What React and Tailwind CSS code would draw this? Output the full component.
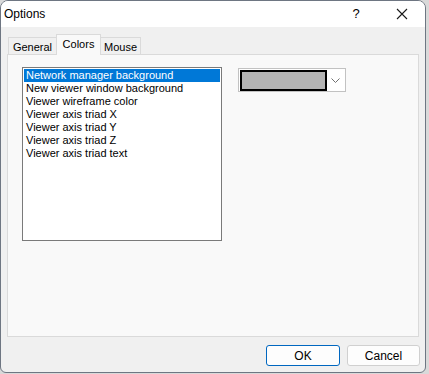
import React from "react";

const items = [
  "Network manager background",
  "New viewer window background",
  "Viewer wireframe color",
  "Viewer axis triad X",
  "Viewer axis triad Y",
  "Viewer axis triad Z",
  "Viewer axis triad text",
];

export default function App() {
  return (
    <div
      className="w-[429px] h-[374px] bg-[#d9d9d9] flex"
      style={{ fontFamily: '"Liberation Sans", Arial, sans-serif' }}
    >
      <div className="w-[426px] h-[373px] flex flex-col border border-[#6e7682] rounded-t-[8px] rounded-b-[6px] overflow-hidden bg-[#f0f0f0] text-[11px] text-[#000]">
        {/* Title bar */}
        <div className="h-[26px] bg-white flex items-center shrink-0">
          <span className="pl-[3px] text-[12px]">Options</span>
          <div className="ml-auto flex items-center">
            <span className="w-[46px] text-center text-[13px]">?</span>
            <span className="w-[46px] flex justify-center">
              <svg width="12" height="12" viewBox="0 0 12 12">
                <path d="M1 1 L11 11 M11 1 L1 11" stroke="#1a1a1a" strokeWidth="1.1" />
              </svg>
            </span>
          </div>
        </div>
        {/* Tabs */}
        <div className="pl-[7px] flex items-end h-[28px] shrink-0">
          <div className="h-[18px] w-[49px] border border-b-0 border-[#dadada] bg-[#f0f0f0] flex items-center justify-center pt-[1px]">
            General
          </div>
          <div className="h-[21px] w-[45px] border border-b-0 border-[#dadada] bg-[#f9f9f9] flex items-center justify-center -mx-px relative z-10 pb-[1px]">
            Colors
          </div>
          <div className="h-[18px] w-[41px] border border-b-0 border-[#dadada] bg-[#f0f0f0] flex items-center justify-center pt-[1px]">
            Mouse
          </div>
        </div>
        {/* Panel */}
        <div className="mx-[6px] h-[283px] border border-[#dadada] bg-[#f9f9f9] flex items-start pl-[14px] pt-[12px] -mt-px">
          <div className="w-[200px] h-[174px] border border-[#7a7a7a] bg-white p-px">
            {items.map((t, i) => (
              <div
                key={t}
                className={
                  "h-[13px] leading-[13px] pl-[2px] whitespace-nowrap overflow-hidden " +
                  (i === 0 ? "bg-[#0078d7] text-white" : "")
                }
              >
                {t}
              </div>
            ))}
          </div>
          <div className="ml-[16px] mt-[1px] w-[108px] h-[24px] border border-[#c2c2c2] bg-white flex items-center p-px">
            <div className="w-[87px] h-[21px] border-2 border-black bg-[#b4b4b4]" />
            <div className="flex-1 flex justify-center">
              <svg width="9" height="5" viewBox="0 0 9 5">
                <path d="M0.5 0.5 L4.5 4.5 L8.5 0.5" fill="none" stroke="#707070" strokeWidth="1" />
              </svg>
            </div>
          </div>
        </div>
        {/* Buttons */}
        <div className="flex justify-end gap-[7px] pr-[5px] pt-[8px]">
          <button className="w-[74px] h-[21px] rounded-[3px] border border-[#0067c0] bg-[#fdfdfd] text-[12px] flex items-center justify-center">
            OK
          </button>
          <button className="w-[73px] h-[21px] rounded-[3px] border border-[#d0d0d0] bg-[#fdfdfd] text-[12px] flex items-center justify-center">
            Cancel
          </button>
        </div>
      </div>
    </div>
  );
}
